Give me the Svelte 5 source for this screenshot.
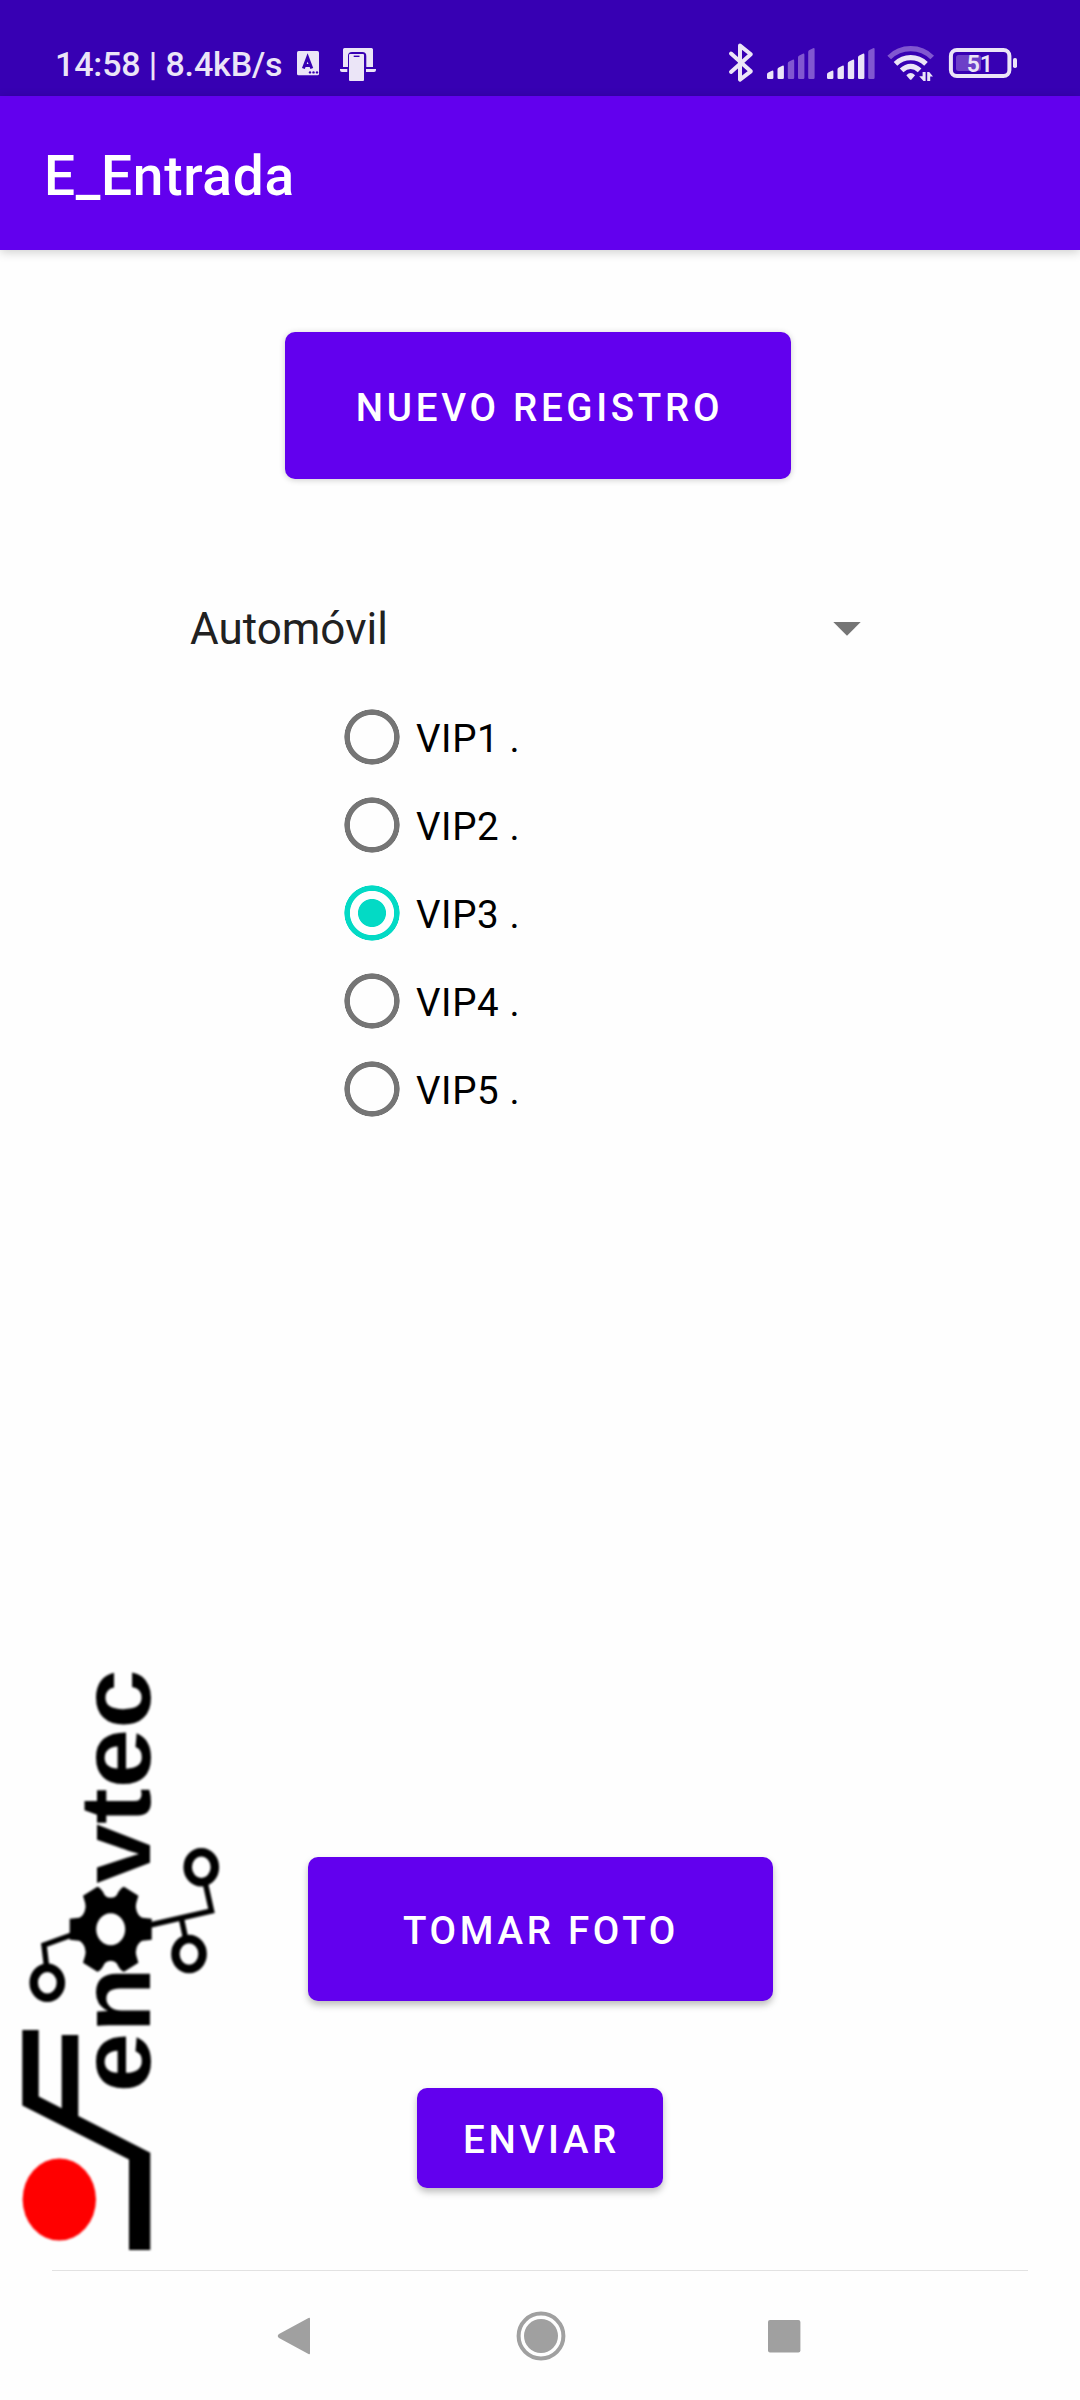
<script>
  const vehicle = 'Automóvil';
  const options = ['VIP1 .', 'VIP2 .', 'VIP3 .', 'VIP4 .', 'VIP5 .'];
  let selected = $state(2);

  const bars = [
    { x: 0, top: 71 },
    { x: 10.5, top: 66 },
    { x: 20.8, top: 60 },
    { x: 31, top: 54 },
    { x: 41.2, top: 48.5 }
  ];
</script>

{#snippet signal(level)}
  <svg class="signal" viewBox="0 0 48 96">
    {#each bars as bar, i}
      <path
        class:dim={i >= level}
        d="M{bar.x} {bar.top + 3.5}q0-1.5 1.3-2.1l3.6-1.7q1.5-.6 1.5 1V77.7q0 1.3-1.3 1.3H{bar.x + 1.3}q-1.3 0-1.3-1.3z"
      />
    {/each}
  </svg>
{/snippet}

<div class="screen">
  <header class="status">
    <span class="clock">14:58 | 8.4kB/s</span>
    <svg class="keyboard" viewBox="297 0 22 96">
      <rect x="297" y="51" width="22" height="24.3" rx="1.6" />
      <path class="cut" d="M303.4 68.5L307.6 57.5L311.8 68.5M305 65.5H310.2" />
      <circle class="hole" cx="310" cy="72.4" r="1.2" />
      <circle class="hole" cx="313.5" cy="72.4" r="1.2" />
      <circle class="hole" cx="317" cy="72.4" r="1.2" />
    </svg>
    <svg class="cast" viewBox="340 0 36 96">
      <path d="M343 67V49.5q0-1.5 1.5-1.5h27q1.5 0 1.5 1.5V67H366.300V56q0-4-4-4H352q-4 0-4 4V67z" />
      <path d="M340 69H347.300V72H342q-2 0-2-2zM366 69H376V70q0 2-2 2H366z" />
      <rect x="349" y="54" width="15" height="27" rx="1" />
      <path class="hole" d="M353.700 55.600H359.500V57H353.700z" />
    </svg>

    <div class="indicators">
      <svg class="bluetooth" viewBox="727 0 28 96">
        <path d="M731 53.500L750.800 71.300L740 79.600V45.600L750.800 54.200L731 72" />
      </svg>
      {@render signal(2)}
      {@render signal(4)}
      <svg class="wifi" viewBox="886 0 50 96">
        <path class="arc faint" d="M889.200 57.500Q898 48.700 910.700 48.700T932.200 57.500" />
        <path class="arc" d="M895.500 63.800Q902 57.600 910.700 57.600T926 63.800" />
        <path class="arc" d="M901.600 70.400Q906 66.300 910.700 66.300T919.600 70.400" />
        <path d="M906.300 75.200Q910.700 71 915.100 75.200L911.700 79.200Q910.700 80.300 909.700 79.200z" />
        <path d="M925.600 72V81H923.500L919.200 76.300H922.600V72zM927.200 81V72H929.200L933 76.600H930.200V81z" />
      </svg>
      <svg class="battery" viewBox="948 0 70 96">
        <rect class="case" x="950.900" y="49.900" width="58.500" height="26.200" rx="6" />
        <rect class="charge" x="956" y="55" width="25" height="16" rx="2.500" />
        <rect x="1013" y="58" width="4" height="10" rx="1.800" />
        <text x="979.800" y="72">51</text>
      </svg>
    </div>
  </header>

  <div class="appbar"><h1>E_Entrada</h1></div>

  <main>
    <button class="btn new">NUEVO REGISTRO</button>

    <div class="spinner">
      <span>{vehicle}</span>
      <svg viewBox="0 0 28 14"><path d="M.3 0H27.700L14 13.700z" /></svg>
    </div>

    <div class="radios">
      {#each options as option, i}
        <label>
          <input type="radio" name="vip" value={i} bind:group={selected} />
          <span>{option}</span>
        </label>
      {/each}
    </div>

    <section class="bottom">
      <svg class="logo" viewBox="0 1650 230 620">
        <g class="word">
          <text transform="translate(149.500 2092.500) rotate(-90) scale(1.075 1)">en</text>
          <text transform="translate(149.500 1883.500) rotate(-90) scale(1.07 1)">vtec</text>
        </g>
        <path
          fill-rule="evenodd"
          transform="translate(110.700 1929.300)"
          d="M0-31.500Q4-31.500 6-34Q9-41 13.300-42.500L27.700-33.500L25.500-26Q24.500-23 26-18Q28-13 31.500-11.500L41-10.500V10.500L31.500 11.500Q28 13 26 18Q24.500 23 25.500 26L27.700 33.500L13.300 42.500Q9 41 6 34Q4 31.500 0 31.500T-6 34Q-9 41-13.300 42.500L-27.700 33.500L-25.500 26Q-24.500 23-26 18Q-28 13-31.500 11.500L-41 10.500V-10.500L-31.500-11.500Q-28-13-26-18Q-24.500-23-25.500-26L-27.700-33.500L-13.300-42.500Q-9-41-6-34Q-4-31.500 0-31.500zM-14.500 0A14.500 16 0 0 0 14.500 0A14.500 16 0 0 0-14.500 0z"
        />
        <path class="wire" d="M148 1925.500L211.500 1911L205.500 1884M181.500 1919L185.500 1938M73 1934.500L44 1945L46.500 1966" />
        <ellipse class="node" cx="201.300" cy="1867.300" rx="13.600" ry="15" />
        <ellipse class="node" cx="189" cy="1954" rx="13.600" ry="15" />
        <ellipse class="node" cx="47.300" cy="1982.700" rx="13.600" ry="15" />
        <path d="M22.300 2030H38.700V2096.500L61.700 2108.200V2035H78.300V2116L150.300 2152.700V2250H129V2159.500L22.300 2105.500z" />
        <ellipse class="dot" cx="59.300" cy="2199.500" rx="36.700" ry="41" />
      </svg>
      <div class="actions">
        <button class="btn photo">TOMAR FOTO</button>
        <button class="btn send">ENVIAR</button>
      </div>
    </section>
  </main>

  <nav>
    <svg viewBox="0 0 50 50"><path d="M35.500 7q1.500-1 1.500 1V42q0 2-1.500 1L6 27q-2.500-2 0-4z" /></svg>
    <svg viewBox="0 0 50 50">
      <circle class="ring" cx="25" cy="25" r="22.400" />
      <circle cx="25" cy="25" r="17" />
    </svg>
    <svg viewBox="0 0 50 50"><rect x="9" y="9" width="32.400" height="32.400" rx="2" /></svg>
  </nav>
</div>

<style>
  :global(body) {
    margin: 0;
    background: #fff;
  }

  .screen {
    display: flex;
    flex-direction: column;
    width: 1080px;
    height: 2400px;
    overflow: hidden;
    background: #fefefe;
    font-family: Roboto, 'Liberation Sans', sans-serif;
  }

  svg {
    display: block;
    flex: none;
    overflow: visible;
  }

  .status {
    display: flex;
    flex: none;
    height: 96px;
    padding-left: 55px;
    box-sizing: border-box;
    background: #3700b3;
    color: #ebe5f7;
    fill: #ebe5f7;
  }

  .clock {
    width: 242px;
    padding-top: 44px;
    font-size: 34px;
    font-weight: 500;
    line-height: 40px;
    letter-spacing: -0.15px;
    white-space: nowrap;
  }

  .keyboard {
    width: 22px;
    height: 96px;
  }

  .cut {
    fill: none;
    stroke: #3700b3;
    stroke-width: 3;
  }

  .hole {
    fill: #3700b3;
  }

  .cast {
    width: 36px;
    height: 96px;
    margin-left: 21px;
  }

  .indicators {
    display: flex;
    margin-left: auto;
    padding-right: 62px;
  }

  .bluetooth {
    width: 28px;
    height: 96px;
    fill: none;
    stroke: #ebe5f7;
    stroke-width: 4;
    stroke-linejoin: round;
    stroke-linecap: round;
  }

  .signal {
    width: 48px;
    height: 96px;
    margin-left: 12px;
  }

  .dim {
    fill: #8157d0;
  }

  .wifi {
    width: 50px;
    height: 96px;
    margin-left: 11px;
  }

  .arc {
    fill: none;
    stroke: #ebe5f7;
    stroke-width: 5.2;
  }

  .faint {
    stroke: #8157d0;
  }

  .battery {
    width: 70px;
    height: 96px;
    margin-left: 12px;
  }

  .case {
    fill: none;
    stroke: #ebe5f7;
    stroke-width: 4;
  }

  .charge {
    fill: #6d3fc8;
  }

  .battery text {
    font-size: 23px;
    font-weight: 600;
    text-anchor: middle;
  }

  .appbar {
    display: flex;
    align-items: center;
    flex: none;
    height: 154px;
    padding: 6px 0 0 44px;
    box-sizing: border-box;
    background: #6200ee;
    box-shadow: 0 2px 10px rgba(0, 0, 0, 0.2);
  }

  h1 {
    margin: 0;
    color: #fff;
    font-size: 55px;
    font-weight: 500;
    line-height: 64px;
    letter-spacing: 0.7px;
  }

  main {
    display: flex;
    flex-direction: column;
    flex: none;
    height: 2020px;
  }

  .btn {
    flex: none;
    padding: 2px 0 0;
    border: 0;
    border-radius: 10px;
    background: #6200ee;
    box-shadow: 0 4px 7px rgba(0, 0, 0, 0.26);
    color: #fff;
    font-family: inherit;
    font-size: 38.5px;
    font-weight: 500;
    letter-spacing: 3.7px;
    white-space: nowrap;
  }

  .new {
    width: 506px;
    height: 147px;
    margin: 82px 0 0 285px;
    padding: 3px 0 0 3px;
    box-shadow: 0 1px 6px rgba(0, 0, 0, 0.2);
  }

  .spinner {
    display: flex;
    align-items: center;
    justify-content: space-between;
    height: 66px;
    margin: 117px 219px 0 190px;
    color: #212121;
    font-size: 44px;
    line-height: 66px;
  }

  .spinner svg {
    width: 28px;
    height: 14px;
    fill: #757575;
  }

  .radios {
    margin: 31px 0 0 344px;
  }

  label {
    display: flex;
    align-items: center;
    height: 88px;
    color: #000;
    font-size: 38.5px;
    letter-spacing: 0.6px;
  }

  label span {
    padding-top: 2px;
  }

  input {
    width: 56px;
    height: 56px;
    margin: 0 16px 0 0;
    appearance: none;
    border-radius: 50%;
    background: radial-gradient(circle, transparent 21.7px, #757575 22.5px, #757575 27.3px, transparent 28px);
  }

  input:checked {
    background: radial-gradient(
      circle,
      #03dac5 13.6px,
      transparent 14.4px,
      transparent 21.7px,
      #03dac5 22.5px,
      #03dac5 27.3px,
      transparent 28px
    );
  }

  .bottom {
    display: grid;
    grid-template-columns: 230px 1fr;
    margin-top: auto;
  }

  .logo {
    width: 230px;
    height: 620px;
    filter: blur(0.9px);
  }

  .word text {
    font-family: 'Liberation Sans', Arial, sans-serif;
    font-size: 100px;
    font-weight: 700;
  }

  .wire {
    fill: none;
    stroke: #000;
    stroke-width: 5.5;
  }

  .node {
    fill: none;
    stroke: #000;
    stroke-width: 8.5;
  }

  .dot {
    fill: #f00;
  }

  .actions {
    display: flex;
    flex-direction: column;
    align-items: center;
    padding: 207px 229px 0 0;
  }

  .photo {
    width: 465px;
    height: 144px;
    padding-left: 1px;
  }

  .send {
    width: 246px;
    height: 100px;
    margin: 87px 1px 0 0;
    padding-left: 3px;
  }

  nav {
    display: flex;
    align-items: center;
    justify-content: center;
    gap: 193px;
    height: 129px;
    margin: 0 52px;
    padding-left: 1px;
    border-top: 1px solid #e2e2e2;
    fill: #a0a0a0;
  }

  nav svg {
    width: 50px;
    height: 50px;
  }

  .ring {
    fill: none;
    stroke: #a0a0a0;
    stroke-width: 4;
  }
</style>
